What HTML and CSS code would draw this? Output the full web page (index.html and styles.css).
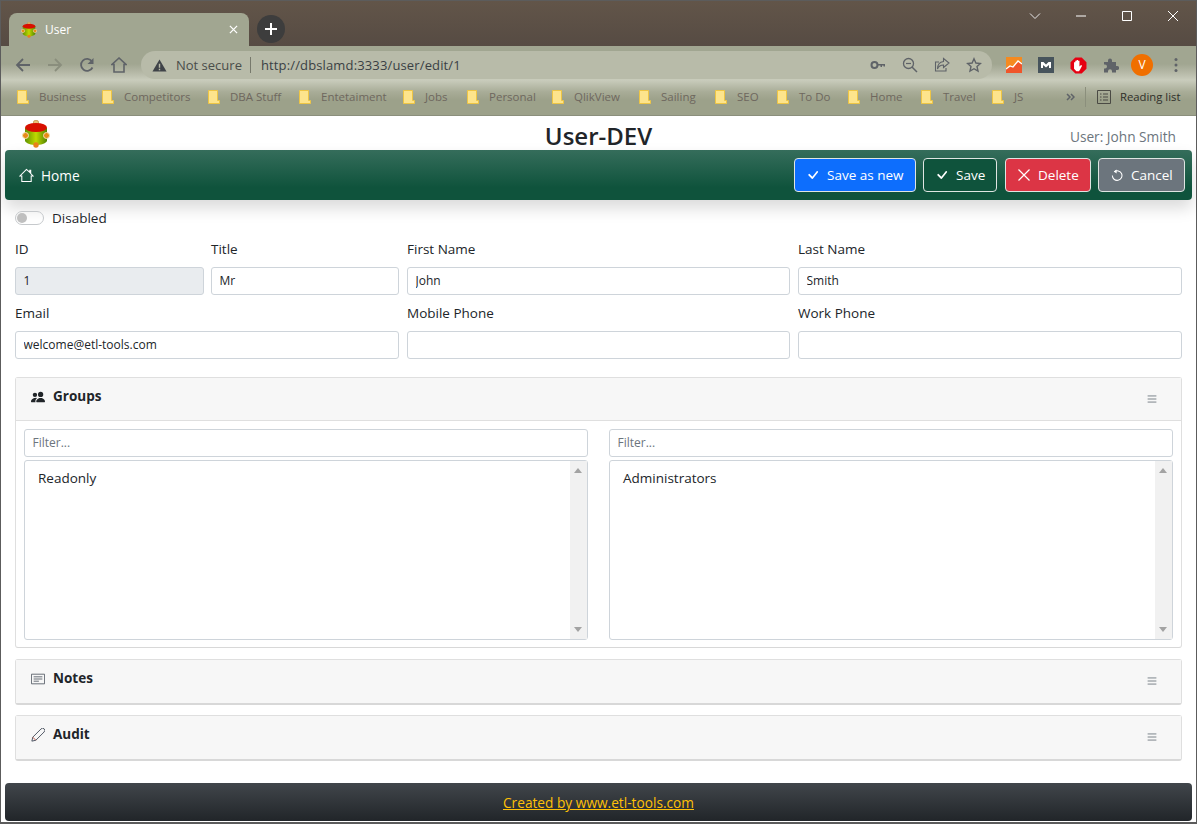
FILE: index.html
```html
<!DOCTYPE html>
<html>

<head>
    <title>User</title>
    <link rel="stylesheet" href="styles.css">
</head>

<body>
    <svg class="defs" width="0" height="0">
        <linearGradient id="barrel" x1="0" x2="1" y1="0" y2="0">
            <stop offset="0" stop-color="#5f9400"/>
            <stop offset=".5" stop-color="#c0d800"/>
            <stop offset="1" stop-color="#4f8400"/>
        </linearGradient>
        <symbol id="logo" viewBox="0 0 28 28">
            <rect x="11.500" y="0.500" width="5" height="5" rx="1.500" fill="#e8c078" stroke="#b8802a" stroke-width=".6"/>
            <path d="M3 8h22v13c-3 5.500-19 5.500-22 0z" fill="url(#barrel)"/>
            <ellipse cx="14" cy="7.500" rx="11" ry="4.500" fill="#d81000"/>
            <circle cx="3.500" cy="15.500" r="3" fill="#e88a18" stroke="#f3e2b0"/>
            <circle cx="24.500" cy="15.500" r="3" fill="#e88a18" stroke="#f3e2b0"/>
            <circle cx="14" cy="25" r="2.700" fill="#e8801a"/>
        </symbol>
        <symbol id="folder" viewBox="0 0 12 14">
            <path d="M.5.5h9v10h2v3H.5z" fill="#fde48c" stroke="#eec544"/>
        </symbol>
        <symbol id="check" viewBox="3 3 10 10">
            <path d="M10.97 4.97a.75.75 0 0 1 1.07 1.05l-3.99 4.99a.75.75 0 0 1-1.08.02L4.324 8.384a.75.75 0 1 1 1.06-1.06l2.094 2.093 3.473-4.425a.267.267 0 0 1 .02-.022z" fill="currentColor"/>
        </symbol>
        <symbol id="list" viewBox="0 0 16 16">
            <path d="M3 4.500h10M3 8h10M3 11.500h10" stroke="currentColor" fill="none"/>
        </symbol>
    </svg>

    <div class="window">
        <div class="tabstrip">
            <div class="tab">
                <svg class="tab-icon"><use href="#logo"/></svg>
                <span class="tab-title">User</span>
                <svg class="tab-close" viewBox="0 0 10 10"><path d="M1 1l8 8M9 1l-8 8" stroke="#fff" stroke-width="1.400"/></svg>
            </div>
            <div class="new-tab">
                <svg viewBox="0 0 14 14" width="14" height="14"><path d="M7 1v12M1 7h12" stroke="#fff" stroke-width="2"/></svg>
            </div>
            <div class="window-buttons">
                <svg viewBox="0 0 12 12" width="12" height="12"><path d="M1 3.500l5 5 5-5" stroke="#e8e8e8" fill="none"/></svg>
                <svg viewBox="0 0 12 12" width="12" height="12"><path d="M1 6h10" stroke="#fff"/></svg>
                <svg viewBox="0 0 12 12" width="12" height="12"><path d="M1.500 1.500h9v9h-9z" stroke="#fff" fill="none"/></svg>
                <svg viewBox="0 0 12 12" width="12" height="12"><path d="M1 1l10 10M11 1L1 11" stroke="#fff"/></svg>
            </div>
        </div>

        <div class="toolbar">
            <div class="nav-buttons">
                <svg viewBox="0 0 16 16" width="16" height="16"><path d="M15 8H2M8 2L2 8l6 6" stroke="#5f6368" stroke-width="1.800" fill="none"/></svg>
                <svg viewBox="0 0 16 16" width="16" height="16"><path d="M1 8h13M8 2l6 6-6 6" stroke="#8a8e7d" stroke-width="1.800" fill="none"/></svg>
                <svg viewBox="0 0 16 16" width="16" height="16"><path d="M13.500 10.500A6 6 0 1 1 13 4.500" stroke="#5f6368" stroke-width="1.800" fill="none"/><path d="M14.500 1v6h-6z" fill="#5f6368"/></svg>
                <svg viewBox="0 0 16 16" width="16" height="16"><path d="M8 1L1 7.500h2V15h10V7.500h2z" stroke="#5f6368" stroke-width="1.600" fill="none"/></svg>
            </div>
            <div class="omnibox">
                <svg viewBox="0 0 16 16" width="15" height="15"><path d="M8 1.500L15.500 14.500H.5z" fill="#3f4348"/><path d="M8 6v4.500M8 11.500v1.500" stroke="#b8bba9" stroke-width="1.500"/></svg>
                <span class="not-secure">Not secure</span>
                <span class="url">http://dbslamd:3333/user/edit/1</span>
                <div class="omni-icons">
                    <svg viewBox="0 0 16 16" width="16" height="16"><circle cx="4.500" cy="8" r="3" fill="none" stroke="#5f6368" stroke-width="2"/><path d="M7 7h8v2.500h-1.500V8.500H12v1.500h-1.500V8.500H7z" fill="#5f6368"/></svg>
                    <svg viewBox="0 0 16 16" width="16" height="16"><circle cx="6.500" cy="6.500" r="5" fill="none" stroke="#5f6368" stroke-width="1.300"/><path d="M10 10l5 5" stroke="#5f6368" stroke-width="1.500"/><path d="M4 6.500h5" stroke="#5f6368" stroke-width="1.200"/></svg>
                    <svg viewBox="0 0 16 16" width="16" height="16"><path d="M9.500 1.500L15 6l-5.500 4.500V8C6 8 4.500 9.500 3.500 12c0-4 2-7 6-7.500zM12 11v3H1.500V5H5" fill="none" stroke="#5f6368" stroke-width="1.100"/></svg>
                    <svg viewBox="0 0 16 16" width="16" height="16"><path d="M8 1.800l1.900 4.200 4.500.5-3.400 3 1 4.500L8 11.700 4 14l1-4.500-3.400-3 4.500-.5z" fill="none" stroke="#5f6368" stroke-width="1.400"/></svg>
                </div>
            </div>
            <div class="extensions">
                <svg viewBox="0 0 16 16" width="16" height="16"><rect width="16" height="16" fill="#f58a20"/><path d="M0 16v-4l4-3 3 1 5-6 4 3v9z" fill="#f0552a"/><path d="M0 12l4-3 3 1 5-6 4 3" fill="none" stroke="#fff" stroke-width="1.300"/></svg>
                <svg viewBox="0 0 16 16" width="16" height="16"><rect width="16" height="16" fill="#47545c"/><path d="M3 11V5h2.500L8 7.500 10.500 5H13v6h-2V8L8 10.500 5 8v3z" fill="#fff"/></svg>
                <svg viewBox="0 0 16 16" width="17" height="17"><path d="M5 .5h6L15.500 5v6L11 15.500H5L.5 11V5z" fill="#e60012"/><path d="M3.800 9V5h1.200v3V3.500h1.300V8V2.800h1.300V8V3.500h1.300V9l1.500-1.500 1 .7-2 3.800-1 1.300H6L3.800 11z" fill="#fff"/></svg>
                <svg viewBox="0 0 16 16" width="16" height="16"><path d="M1 5h4V3.500a2 2 0 0 1 4 0V5h4v4h1.200a2 2 0 0 1 0 4H13v2.500H9v-1.200a2 2 0 0 0-4 0v1.200H1v-4h1a2 2 0 0 0 0-4H1z" fill="#5f6368"/></svg>
                <span class="avatar">V</span>
                <svg viewBox="0 0 4 16" width="4" height="16"><circle cx="2" cy="2.500" r="1.500" fill="#5f6368"/><circle cx="2" cy="8" r="1.500" fill="#5f6368"/><circle cx="2" cy="13.500" r="1.500" fill="#5f6368"/></svg>
            </div>
        </div>

        <div class="bookmarks">
            <a class="bookmark bm-business"><svg><use href="#folder"/></svg>Business</a>
            <a class="bookmark bm-competitors"><svg><use href="#folder"/></svg>Competitors</a>
            <a class="bookmark bm-dba"><svg><use href="#folder"/></svg>DBA Stuff</a>
            <a class="bookmark bm-ent"><svg><use href="#folder"/></svg>Entetaiment</a>
            <a class="bookmark bm-jobs"><svg><use href="#folder"/></svg>Jobs</a>
            <a class="bookmark bm-personal"><svg><use href="#folder"/></svg>Personal</a>
            <a class="bookmark bm-qlik"><svg><use href="#folder"/></svg>QlikView</a>
            <a class="bookmark bm-sailing"><svg><use href="#folder"/></svg>Sailing</a>
            <a class="bookmark bm-seo"><svg><use href="#folder"/></svg>SEO</a>
            <a class="bookmark bm-todo"><svg><use href="#folder"/></svg>To Do</a>
            <a class="bookmark bm-home"><svg><use href="#folder"/></svg>Home</a>
            <a class="bookmark bm-travel"><svg><use href="#folder"/></svg>Travel</a>
            <a class="bookmark bm-js"><svg><use href="#folder"/></svg>JS</a>
            <svg class="more" viewBox="0 0 9 8" width="9" height="8"><path d="M1 1l3 3-3 3M5 1l3 3-3 3" stroke="#5f6368" stroke-width="1.500" fill="none"/></svg>
            <span class="bookmarks-sep"></span>
            <svg class="reading-icon" viewBox="0 0 14 14" width="14" height="14"><path d="M.5.5h13v13H.5zM3 4h1.500M6 4h5M3 7h1.500M6 7h5M3 10h1.500M6 10h5" stroke="#4a4a44" fill="none"/></svg>
            <span class="reading">Reading list</span>
        </div>

        <div class="page">
            <header class="page-header">
                <svg class="logo"><use href="#logo"/></svg>
                <h1>User-DEV</h1>
                <span class="current-user">User: John Smith</span>
            </header>

            <nav class="navbar">
                <a class="home-link">
                    <svg viewBox="0 0 16 16" width="15" height="15"><path d="M8 1.500L1 8.500h2v6h10v-6h2L12.500 6V2.500h-1v2.200z" fill="none" stroke="#fff" stroke-width="1.100"/></svg>
                    Home
                </a>
                <div class="nav-actions">
                    <button class="btn btn-blue"><svg><use href="#check"/></svg>Save as new</button>
                    <button class="btn btn-green"><svg><use href="#check"/></svg>Save</button>
                    <button class="btn btn-red"><svg viewBox="2 2 12 12"><path d="M2.500 2.500l11 11M13.500 2.500l-11 11" stroke="currentColor" stroke-width="1.200"/></svg>Delete</button>
                    <button class="btn btn-grey"><svg viewBox="1 0 14 15"><path d="M4.500 3.500A6 6 0 1 1 2.200 8" fill="none" stroke="currentColor" stroke-width="1.300"/><path d="M7.500 .5v5L4 3z" fill="currentColor"/></svg>Cancel</button>
                </div>
            </nav>

            <main class="content">
                <label class="switch-row"><span class="switch"></span>Disabled</label>

                <div class="form-row">
                    <div class="field-pair">
                        <div class="field"><label>ID</label><input class="input input-readonly" value="1"></div>
                        <div class="field"><label>Title</label><input class="input" value="Mr"></div>
                    </div>
                    <div class="field"><label>First Name</label><input class="input" value="John"></div>
                    <div class="field"><label>Last Name</label><input class="input" value="Smith"></div>
                </div>

                <div class="form-row">
                    <div class="field"><label>Email</label><input class="input" value="welcome@etl-tools.com"></div>
                    <div class="field"><label>Mobile Phone</label><input class="input"></div>
                    <div class="field"><label>Work Phone</label><input class="input"></div>
                </div>

                <section class="card card-open">
                    <div class="card-header">
                        <svg class="card-icon" viewBox="0 0 16 16"><path d="M7 14s-1 0-1-1 1-4 5-4 5 3 5 4-1 1-1 1H7zm4-6a3 3 0 1 0 0-6 3 3 0 0 0 0 6z" fill="#212529"/><path d="M5.216 14A2.238 2.238 0 0 1 5 13c0-1.355.68-2.750 1.936-3.720A6.325 6.325 0 0 0 5 9c-4 0-5 3-5 4s1 1 1 1h4.216z" fill="#212529"/><path d="M4.500 8a2.500 2.500 0 1 0 0-5 2.500 2.500 0 0 0 0 5z" fill="#212529"/></svg>
                        <span class="card-title">Groups</span>
                        <svg class="card-menu"><use href="#list"/></svg>
                    </div>
                    <div class="card-body">
                        <div class="list-column">
                            <input class="input filter" placeholder="Filter...">
                            <div class="listbox">
                                <div class="listbox-items">Readonly</div>
                                <div class="scrollbar"><span class="arrow-up"></span><span class="arrow-down"></span></div>
                            </div>
                        </div>
                        <div class="list-column">
                            <input class="input filter" placeholder="Filter...">
                            <div class="listbox">
                                <div class="listbox-items">Administrators</div>
                                <div class="scrollbar"><span class="arrow-up"></span><span class="arrow-down"></span></div>
                            </div>
                        </div>
                    </div>
                </section>

                <section class="card">
                    <div class="card-header">
                        <svg class="card-icon" viewBox="0 0 16 16"><path d="M.5 2.500h15v11H.5z" fill="none" stroke="#555c66"/><path d="M3 5.500h10M3 8h10M3 10.500h6" stroke="#555c66"/></svg>
                        <span class="card-title">Notes</span>
                        <svg class="card-menu"><use href="#list"/></svg>
                    </div>
                </section>

                <section class="card">
                    <div class="card-header">
                        <svg class="card-icon" viewBox="0 0 16 16"><path d="M1 15l1-4.500L11.500 1a1.500 1.500 0 0 1 3.500 3.500L5.500 14z" fill="none" stroke="#3c4452"/><path d="M2 10.500l3.500 3.500" stroke="#b5483a"/></svg>
                        <span class="card-title">Audit</span>
                        <svg class="card-menu"><use href="#list"/></svg>
                    </div>
                </section>
            </main>

            <footer class="footer"><a href="#">Created by www.etl-tools.com</a></footer>
        </div>
    </div>
</body>
</html>
```
FILE: styles.css
```css
* {
    box-sizing: border-box;
}

html,
body {
    margin: 0;
    height: 100%;
    overflow: hidden;
}

body {
    font-family: "Open Sans", "Noto Sans", sans-serif;
    font-size: 13.5px;
    color: #212529;
    background: #fff;
}

.defs {
    position: absolute;
}

.window {
    height: 824px;
    display: flex;
    flex-direction: column;
    border: 1px solid #5c5c5c;
    border-bottom-width: 2px;
}

/* browser chrome */
.tabstrip {
    height: 45px;
    flex: none;
    display: flex;
    align-items: flex-end;
    padding-left: 8px;
    background: linear-gradient(#625549, #564b43);
}

.tab {
    width: 240px;
    height: 33px;
    display: flex;
    align-items: center;
    padding: 0 11px 0 12px;
    background: #a1a691;
    border-radius: 8px 8px 0 0;
    color: #fff;
    font-size: 12px;
}

.tab-icon {
    width: 16px;
    height: 16px;
    margin-right: 8px;
}

.tab-title {
    flex: 1;
}

.tab-close {
    width: 9px;
    height: 9px;
}

.new-tab {
    width: 28px;
    height: 28px;
    margin: 0 0 3px 8px;
    border-radius: 50%;
    background: #3d3d3d;
    display: flex;
    align-items: center;
    justify-content: center;
}

.window-buttons {
    margin-left: auto;
    align-self: flex-start;
    display: flex;
    gap: 34px;
    padding: 9px 17px 0 0;
}

.toolbar {
    height: 34px;
    flex: none;
    display: flex;
    align-items: flex-start;
    padding: 5px 16px 0 14px;
    background: linear-gradient(#a1a691 0, #a1a691 18px, #b4b7a5 26px, #c9ccbc 34px);
}

.nav-buttons {
    height: 28px;
    display: flex;
    align-items: center;
    gap: 16px;
}

.omnibox {
    width: 851px;
    height: 28px;
    margin-left: 14px;
    display: flex;
    align-items: center;
    padding: 0 10px 0 11px;
    background: #b8bba9;
    border-radius: 14px;
    font-size: 13px;
}

.not-secure {
    margin-left: 9px;
    padding-right: 8px;
    border-right: 1px solid #77796c;
    line-height: 16px;
    color: #4a4d4a;
}

.url {
    margin-left: 10px;
    color: #3a3f44;
    letter-spacing: .14px;
}

.omni-icons {
    margin-left: auto;
    display: flex;
    gap: 16px;
}

.extensions {
    height: 28px;
    margin-left: 14px;
    display: flex;
    align-items: center;
    gap: 16px;
    flex: 1;
}

.avatar {
    width: 22px;
    height: 22px;
    margin: 0 5px 0 -4px;
    border-radius: 50%;
    background: #f06f00;
    color: #fff;
    font-size: 12px;
    text-align: center;
    line-height: 22px;
}

.bookmarks {
    height: 36px;
    flex: none;
    display: flex;
    align-items: center;
    padding: 0 0 2px 16px;
    background: linear-gradient(#c9ccbc 0, #a8ac97 12px, #9ca18a 20px);
    border-bottom: 1px solid #8b8f7c;
    font-size: 11.5px;
    color: #6e675e;
    white-space: nowrap;
}

.bookmark {
    display: flex;
    align-items: center;
}

.bookmark svg {
    width: 12px;
    height: 14px;
    margin-right: 10px;
}

.bm-business { width: 85px; }
.bm-competitors { width: 106px; }
.bm-dba { width: 91px; }
.bm-ent { width: 104px; }
.bm-jobs { width: 64px; }
.bm-personal { width: 85px; }
.bm-qlik { width: 87px; }
.bm-sailing { width: 76px; }
.bm-seo { width: 62px; }
.bm-todo { width: 71px; }
.bm-home { width: 73px; }
.bm-travel { width: 71px; }
.bm-js { width: 74px; }

.more {
    flex: none;
}

.bookmarks-sep {
    width: 1px;
    height: 20px;
    margin: 0 11px 0 10px;
    background: #8b8f7c;
}

.reading-icon {
    margin-right: 9px;
}

.reading {
    color: #2f2f2a;
    font-size: 11.3px;
}

/* page */
.page {
    flex: 1;
    display: flex;
    flex-direction: column;
    padding: 0 4px 0;
    min-height: 0;
}

.page-header {
    height: 34px;
    flex: none;
    display: flex;
    align-items: center;
    position: relative;
    justify-content: center;
}

.logo {
    position: absolute;
    left: 17px;
    top: 4px;
    width: 28px;
    height: 28px;
}

h1 {
    margin: 6px 0 0;
    font-size: 24px;
    font-weight: 600;
    line-height: 28px;
}

.current-user {
    position: absolute;
    right: 16px;
    top: 11px;
    color: #6c757d;
    font-size: 13.7px;
}

.navbar {
    height: 50px;
    flex: none;
    display: flex;
    align-items: center;
    justify-content: space-between;
    padding: 0 7px 0 14px;
    border-radius: 4px;
    background: linear-gradient(#356d5b, #0f533c 75%);
    box-shadow: 0 8px 16px rgba(0, 0, 0, .15);
}

.home-link {
    display: flex;
    align-items: center;
    gap: 7px;
    color: #fff;
    font-size: 13.7px;
}

.nav-actions {
    display: flex;
    gap: 7px;
}

.btn {
    height: 34px;
    display: flex;
    align-items: center;
    padding: 0 0 0 12px;
    gap: 8px;
    font: inherit;
    font-size: 13.5px;
    color: #fff;
    white-space: nowrap;
    border: 1px solid #dfe5e2;
    border-radius: 4px;
}

.btn svg {
    width: 12px;
    height: 12px;
    flex: none;
}

.btn-blue {
    width: 122px;
    background: #0d6efd;
}

.btn-green {
    width: 74px;
    background: #0f533c;
}

.btn-red {
    width: 86px;
    margin-left: 1px;
    background: #dc3545;
}

.btn-grey {
    width: 87px;
    background: #6c757d;
}

.content {
    flex: 1;
    padding: 0 10px;
    min-height: 0;
}

.switch-row {
    display: flex;
    align-items: center;
    height: 18px;
    margin-top: 9px;
    gap: 8px;
}

.switch {
    width: 29px;
    height: 14px;
    border: 1px solid #c6c9cc;
    border-radius: 7px;
    position: relative;
}

.switch::before {
    content: "";
    position: absolute;
    left: 1px;
    top: 1px;
    width: 10px;
    height: 10px;
    border-radius: 50%;
    background: #bfbfbf;
}

.form-row {
    display: grid;
    grid-template-columns: 384px 383px 384px;
    gap: 8px;
    margin-top: 12px;
}

.form-row + .form-row {
    margin-top: 8px;
}

.field-pair {
    display: grid;
    grid-template-columns: 189px 188px;
    gap: 7px;
}

.field label {
    display: block;
    height: 20px;
    line-height: 20px;
    margin-bottom: 8px;
}

.input {
    display: block;
    width: 100%;
    height: 28px;
    padding: 0 7.5px 2px;
    font: inherit;
    font-size: 12px;
    color: #212529;
    background: #fff;
    border: 1px solid #ced4da;
    border-radius: 3px;
    outline: none;
}

.input-readonly {
    background: #e9ecef;
}

.input::placeholder {
    color: #6c757d;
    opacity: 1;
}

.card {
    margin-top: 10px;
    border: 1px solid #dfdfdf;
    border-bottom: 2px solid #d8d8d8;
    border-radius: 3px;
    background: #f7f7f7;
}

.card-open {
    margin-top: 18px;
    background: #fff;
    border-bottom-width: 1px;
}

.card-open + .card {
    margin-top: 11px;
}

.card-header {
    height: 43px;
    display: flex;
    align-items: flex-start;
    padding: 8px 22px 0 15px;
    background: #f7f7f7;
}

.card-open .card-header {
    border-bottom: 1px solid #dfdfdf;
}

.card-icon {
    width: 14px;
    height: 14px;
    margin: 4px 8px 0 0;
}

.card-title {
    font-weight: 700;
    font-size: 13.5px;
    line-height: 20px;
}

.card-menu {
    width: 14px;
    height: 14px;
    margin: 6px 0 0 auto;
    color: #6c757d;
}

.card-body {
    display: grid;
    grid-template-columns: 564px 564px;
    gap: 21px;
    padding: 8px 8px 7px;
}

.list-column .listbox {
    margin-top: 3px;
}

.listbox {
    height: 180px;
    display: flex;
    border: 1px solid #ced4da;
    border-radius: 3px;
}

.listbox-items {
    flex: 1;
    padding: 8px 13px;
}

.scrollbar {
    width: 17px;
    position: relative;
    background: #f1f1f1;
}

.arrow-up,
.arrow-down {
    position: absolute;
    left: 4px;
    border-left: 4px solid transparent;
    border-right: 4px solid transparent;
}

.arrow-up {
    top: 7px;
    border-bottom: 5px solid #a3a3a3;
}

.arrow-down {
    bottom: 7px;
    border-top: 5px solid #a3a3a3;
}

.footer {
    height: 38px;
    flex: none;
    display: flex;
    align-items: center;
    justify-content: center;
    margin-bottom: 1px;
    border-radius: 4px;
    background: linear-gradient(#41464b, #212529);
}

.footer a {
    color: #ffc107;
    font-size: 13.7px;
}
```
